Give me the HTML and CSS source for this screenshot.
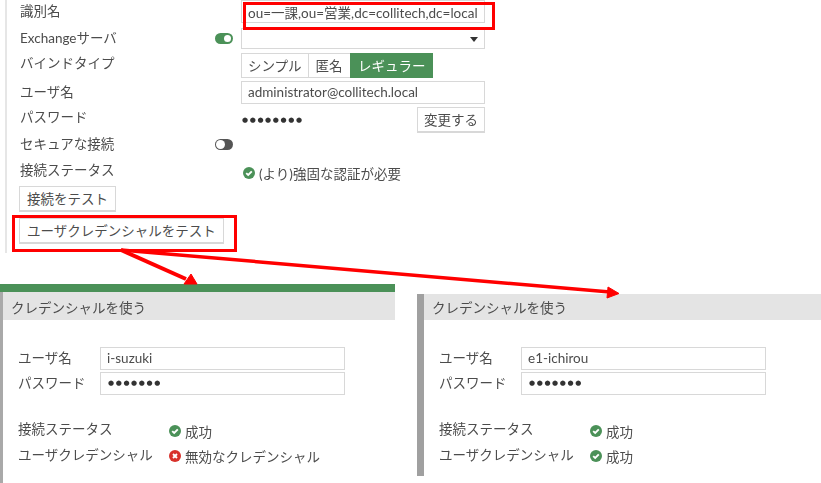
FILE: index.html
```html
<!DOCTYPE html>
<html lang="ja">
<head>
<meta charset="utf-8">
<title>ユーザクレデンシャルをテスト</title>
<link rel="stylesheet" href="styles.css">
</head>
<body>
<main class="canvas">
  <section class="win win-ldap">
    <div class="form">
      <div class="row r-dn"><span class="label">識別名</span><div class="field"><div class="input">ou=一課,ou=営業,dc=collitech,dc=local</div></div></div>
      <div class="row r-ex"><span class="label">Exchangeサーバ</span><span class="toggle on"></span><div class="field"><div class="input select"><span class="caret"></span></div></div></div>
      <div class="row r-bind"><span class="label">バインドタイプ</span><div class="field seg"><span class="seg-item">シンプル</span><span class="seg-item seg-wide">匿名</span><span class="seg-item active">レギュラー</span></div></div>
      <div class="row r-user"><span class="label">ユーザ名</span><div class="field"><div class="input">administrator@collitech.local</div></div></div>
      <div class="row r-pass"><span class="label">パスワード</span><div class="field pass"><span class="dots">●●●●●●●●</span><span class="btn">変更する</span></div></div>
      <div class="row r-sec"><span class="label">セキュアな接続</span><span class="toggle off"></span></div>
      <div class="row r-stat"><span class="label">接続ステータス</span><div class="field status">
        <svg class="ico" viewBox="0 0 12 12"><circle cx="6" cy="6" r="6" fill="#4b9158"/><path d="M3.2 6.1 5.2 8 8.8 4.3" fill="none" stroke="#fff" stroke-width="1.9"/></svg>
        <span>(より)強固な認証が必要</span></div></div>
      <div class="btn-row"><span class="btn">接続をテスト</span></div>
      <div class="btn-row"><span class="btn">ユーザクレデンシャルをテスト</span></div>
    </div>
  </section>

  <section class="win win-a">
    <div class="bar"></div>
    <div class="dlg">
      <header class="dlg-head">クレデンシャルを使う</header>
      <div class="dlg-body">
        <div class="drow"><span class="dlabel">ユーザ名</span><div class="input dinput">i-suzuki</div></div>
        <div class="drow"><span class="dlabel">パスワード</span><div class="input dinput ddots">●●●●●●●</div></div>
        <div class="srow first"><span class="dlabel">接続ステータス</span><div class="status">
          <svg class="ico" viewBox="0 0 12 12"><circle cx="6" cy="6" r="6" fill="#4b9158"/><path d="M3.2 6.1 5.2 8 8.8 4.3" fill="none" stroke="#fff" stroke-width="1.9"/></svg><span>成功</span></div></div>
        <div class="srow"><span class="dlabel">ユーザクレデンシャル</span><div class="status">
          <svg class="ico" viewBox="0 0 12 12"><circle cx="6" cy="6" r="6" fill="#d8312b"/><path d="M4 4 8 8M8 4 4 8" fill="none" stroke="#fff" stroke-width="1.9"/></svg><span>無効なクレデンシャル</span></div></div>
      </div>
    </div>
  </section>

  <section class="win win-b">
    <div class="dlg">
      <header class="dlg-head">クレデンシャルを使う</header>
      <div class="dlg-body">
        <div class="drow"><span class="dlabel">ユーザ名</span><div class="input dinput">e1-ichirou</div></div>
        <div class="drow"><span class="dlabel">パスワード</span><div class="input dinput ddots">●●●●●●●</div></div>
        <div class="srow first"><span class="dlabel">接続ステータス</span><div class="status">
          <svg class="ico" viewBox="0 0 12 12"><circle cx="6" cy="6" r="6" fill="#4b9158"/><path d="M3.2 6.1 5.2 8 8.8 4.3" fill="none" stroke="#fff" stroke-width="1.9"/></svg><span>成功</span></div></div>
        <div class="srow"><span class="dlabel">ユーザクレデンシャル</span><div class="status">
          <svg class="ico" viewBox="0 0 12 12"><circle cx="6" cy="6" r="6" fill="#4b9158"/><path d="M3.2 6.1 5.2 8 8.8 4.3" fill="none" stroke="#fff" stroke-width="1.9"/></svg><span>成功</span></div></div>
      </div>
    </div>
  </section>

  <div class="callout c-dn"></div>
  <div class="callout c-test"></div>
  <svg class="arrows" viewBox="0 0 821 483" width="821" height="483">
    <path d="M121 250 186 279" stroke="#f00" stroke-width="4" fill="none"/>
    <path d="M197 284 184 284 191 274Z" fill="#f00" stroke="#f00"/>
    <path d="M121 250 610 292" stroke="#f00" stroke-width="3.5" fill="none"/>
    <path d="M619 293.500 607 298 608 287Z" fill="#f00" stroke="#f00"/>
  </svg>
</main>
</body>
</html>
```
FILE: styles.css
```css
* { box-sizing: border-box; }
html, body { margin: 0; padding: 0; background: #fff; }
body { width: 821px; height: 483px; overflow: hidden; font-family: Lato, "Noto Sans CJK JP", sans-serif; font-size: 13.500px; color: #4c4c4c; }
.canvas { position: relative; width: 821px; height: 483px; filter: blur(0.35px); }
.win { position: absolute; }

.win-ldap { left: 0; top: 0; width: 500px; height: 253px; padding-left: 20px; }
.win-ldap::before { content: ""; position: absolute; left: 5px; top: 0; bottom: 0; width: 2px; background: #e6e6e6; }
.form { display: flex; flex-direction: column; }
.row { display: flex; align-items: flex-start; position: relative; }
.label { line-height: 18px; }
.field { margin-left: auto; width: 244px; margin-right: 15px; }
.input { height: 23px; border: 1px solid #d8d8d8; background: #fff; padding: 0 6px; line-height: 21px; white-space: nowrap; }
.r-dn { height: 27px; padding-top: 2px; }
.r-dn .field { margin-top: -2px; }
.r-dn .input { line-height: 25px; }
.r-ex { height: 26px; padding-top: 1px; }
.r-ex .label { margin-top: 1px; }
.r-bind { height: 28px; }
.r-bind .label { margin-top: 1px; }
.r-user { height: 26px; }
.r-user .label { margin-top: 2px; }
.r-pass { height: 28px; }
.r-pass .label { margin-top: 1px; }
.r-sec { height: 26px; }
.r-stat { height: 25px; }

.select { position: relative; height: 21px; }
.caret { position: absolute; right: 6px; top: 8px; border: 4px solid transparent; border-top: 5px solid #333; border-bottom: 0; }

.toggle { position: absolute; left: 195px; top: 6px; width: 18px; height: 11px; border-radius: 6px; }
.toggle::after { content: ""; position: absolute; top: 2px; width: 7px; height: 7px; border-radius: 50%; background: #fff; }
.toggle.on { background: #4b9158; }
.toggle.on::after { right: 2px; }
.toggle.off { background: #555; top: 4px; }
.toggle.off::after { left: 1px; top: 1px; width: 9px; height: 9px; }

.seg { display: flex; height: 25px; }
.seg-item { height: 25px; border: 1px solid #d8d8d8; border-right: 0; padding: 0 6px; line-height: 25px; }
.seg-item.seg-wide { padding: 0 7px; }
.seg-item.active { background: #4b9158; border-color: #4b9158; color: #fff; padding: 0 7.500px; }

.pass { display: flex; align-items: center; justify-content: space-between; }
.dots { font-size: 7px; letter-spacing: 1.600px; color: #333; font-family: "DejaVu Sans", sans-serif; padding-left: 1px; }
.btn { display: inline-block; height: 26px; border: 1px solid #d8d8d8; border-bottom-width: 2px; padding: 0 6px; line-height: 24px; background: #fff; white-space: nowrap; }
.btn-row .btn { padding: 0 7px; }

.status { display: flex; align-items: center; gap: 4px; height: 18px; }
.field.status { margin-top: 3px; padding-left: 2px; }
.ico { width: 12px; height: 12px; flex: none; }

.btn-row { height: 32px; margin-left: -1px; }

.win-a { left: 0; top: 284px; width: 395px; height: 199px; }
.bar { height: 8px; background: #4b9158; }
.win-b { left: 417px; top: 294px; width: 404px; height: 182px; border-left: 7px solid #a0a0a0; }
.win-a .dlg { border-left: 3px solid #a9a9a9; height: 191px; }
.dlg-head { height: 26px; background: #e4e4e4; padding-left: 8px; line-height: 29px; }
.win-a .dlg-head { height: 28px; line-height: 32px; }
.dlg-body { padding: 27px 0 0 15px; }
.drow { display: flex; height: 25px; }
.dlabel { line-height: 22px; display: block; white-space: nowrap; }
.dinput { position: absolute; left: 100px; width: 245px; height: 23px; padding-left: 6px; line-height: 21px; }
.win-b .dinput { left: 97px; }
.ddots { font-size: 7px; letter-spacing: 1.600px; color: #333; font-family: "DejaVu Sans", sans-serif; padding-left: 7px; line-height: 20px; }
.srow { display: flex; height: 26px; position: relative; }
.srow.first { margin-top: 21px; }
.srow .status { position: absolute; left: 151px; top: 4px; }
.srow:last-child .status { top: 3px; }

.callout { position: absolute; border: 3px solid #f00; }
.c-dn { left: 243px; top: 2px; width: 252px; height: 28px; }
.c-test { left: 12px; top: 215px; width: 225px; height: 37px; }
.arrows { position: absolute; left: 0; top: 0; pointer-events: none; }
```
